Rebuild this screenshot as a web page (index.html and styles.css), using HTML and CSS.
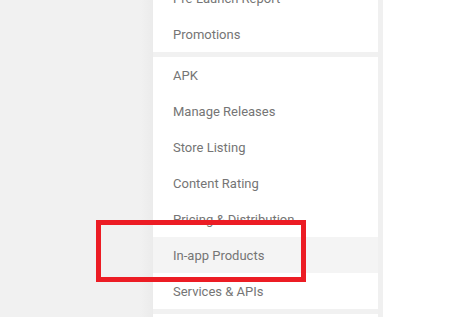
FILE: index.html
```html
<!DOCTYPE html>
<html>
<head>
<meta charset="utf-8">
<link rel="stylesheet" href="styles.css">
</head>
<body>
<div class="page">
  <div class="gutter"></div>
  <nav class="sidebar">
    <div class="section first">
      <div class="item">Pre-Launch Report</div>
      <div class="item">Promotions</div>
    </div>
    <div class="section">
      <div class="item">APK</div>
      <div class="item">Manage Releases</div>
      <div class="item">Store Listing</div>
      <div class="item">Content Rating</div>
      <div class="item">Pricing &amp; Distribution</div>
      <div class="item active">In-app Products</div>
      <div class="item">Services &amp; APIs</div>
    </div>
    <div class="section">
      <div class="item"></div>
    </div>
  </nav>
  <div class="divider"></div>
  <main class="content"></main>
</div>
<div class="highlight-box"></div>
</body>
</html>
```
FILE: styles.css
```css
html, body {
  margin: 0;
  padding: 0;
  width: 475px;
  height: 317px;
  overflow: hidden;
  background: #f1f1f1;
  font-family: Roboto, "Liberation Sans", Arial, sans-serif;
}
.page {
  display: flex;
  height: 317px;
  overflow: hidden;
}
.gutter {
  width: 153px;
  flex: none;
  background: linear-gradient(to right, #f1f1f1 0, #f1f1f1 140px, #ebebeb 153px);
}
.sidebar {
  width: 225px;
  flex: none;
  display: flex;
  flex-direction: column;
  gap: 5px;
  margin-top: -20px;
  background: #f1f1f1;
}
.section {
  background: #ffffff;
  display: flex;
  flex-direction: column;
}
.item {
  height: 36px;
  display: flex;
  align-items: center;
  padding-left: 20px;
  font-size: 13px;
  color: #757575;
  white-space: nowrap;
}
.item.active {
  background: #f4f4f4;
}
.divider {
  width: 5px;
  flex: none;
  background: #f0f0f0;
}
.content {
  flex: 1;
  background: #ffffff;
}
.highlight-box {
  position: absolute;
  left: 96px;
  top: 220px;
  width: 200px;
  height: 52px;
  border: 5px solid #ec1c24;
}
```
